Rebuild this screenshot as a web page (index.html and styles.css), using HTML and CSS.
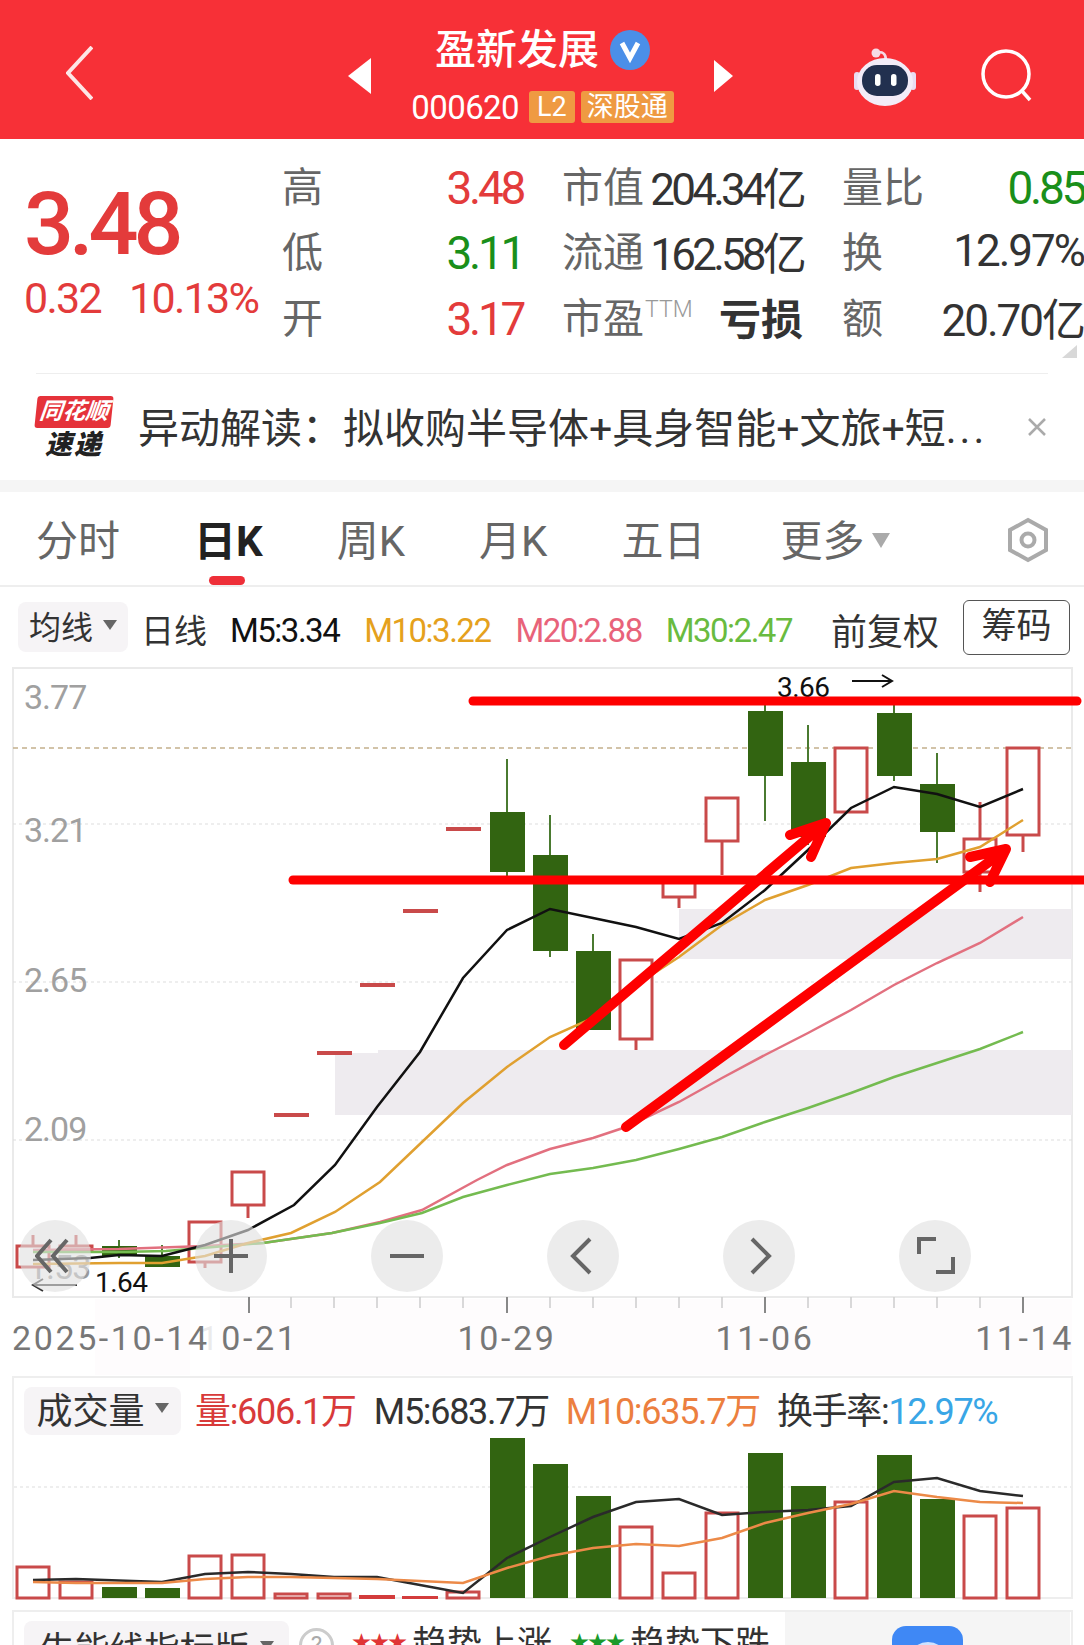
FILE: index.html
```html
<!DOCTYPE html>
<html lang="zh-CN">
<head>
    <meta charset="UTF-8">
    <meta name="viewport" content="width=device-width, initial-scale=1.0">
    <title>盈新发展 000620</title>
    <link rel="stylesheet" href="styles.css">
</head>
<body>
    <!-- Header -->
    <header class="head">
        <svg class="back" width="27" height="54" viewBox="0 0 27 54"><path d="M26 1 L2 27 L26 53" /></svg>
        <svg class="tri-left" width="23" height="36" viewBox="0 0 23 36"><path d="M23 0 V36 L0 18 Z" /></svg>
        <div class="title-box">
            <div class="title-row">
                <span class="title">盈新发展</span>
                <svg class="badge-v" width="40" height="40" viewBox="0 0 40 40"><circle cx="20" cy="20" r="20" /><path d="M12 13 L20 28 L28 13" /></svg>
            </div>
            <div class="code-row">
                <span class="code">000620</span>
                <span class="tag tag-l2">L2</span>
                <span class="tag">深股通</span>
            </div>
        </div>
        <svg class="tri-right" width="19" height="32" viewBox="0 0 19 32"><path d="M0 0 V32 L19 16 Z" /></svg>
        <svg class="robot" width="62" height="58" viewBox="0 0 62 58">
            <path d="M22 6 C28 2 32 6 32 12" fill="none" stroke="#f6d9e4" stroke-width="2.5" />
            <circle cx="22" cy="5" r="4.5" fill="#f6dbe6" />
            <rect x="0" y="24" width="6" height="18" rx="3" fill="#e9dcf2" />
            <rect x="56" y="24" width="6" height="18" rx="3" fill="#e9dcf2" />
            <ellipse cx="31" cy="34" rx="28" ry="24" fill="#f3ecf8" />
            <rect x="8" y="17" width="46" height="31" rx="15" fill="#22304f" />
            <rect x="21" y="26" width="5.5" height="12" rx="2.7" fill="#fff" />
            <rect x="37" y="26" width="5.5" height="12" rx="2.7" fill="#fff" />
        </svg>
        <svg class="search" width="52" height="56" viewBox="0 0 52 56">
            <circle cx="25" cy="25" r="23" />
            <path d="M41 42 L49 51" />
        </svg>
    </header>

    <!-- Quote -->
    <section class="quote">
        <div class="last">
            <div class="price">3.48</div>
            <div class="change"><span>0.32</span><span>10.13%</span></div>
        </div>
        <div class="stats">
            <div class="cell"><span class="lb">高</span><span class="up">3.48</span></div>
            <div class="cell"><span class="lb">市值</span><span class="val tight">204.34亿</span></div>
            <div class="cell"><span class="lb">量比</span><span class="down">0.85</span></div>
            <div class="cell"><span class="lb">低</span><span class="down">3.11</span></div>
            <div class="cell"><span class="lb">流通</span><span class="val tight">162.58亿</span></div>
            <div class="cell"><span class="lb">换</span><span class="val">12.97%</span></div>
            <div class="cell"><span class="lb">开</span><span class="up">3.17</span></div>
            <div class="cell"><span class="lb">市盈<sup class="ttm">TTM</sup></span><span class="val loss">亏损</span></div>
            <div class="cell"><span class="lb">额</span><span class="val">20.70亿</span></div>
        </div>
        <div class="corner"></div>
    </section>
    <div class="divider"></div>

    <!-- News -->
    <section class="news">
        <div class="logo">
            <div class="logo-top">同花顺</div>
            <div class="logo-bot">速递</div>
        </div>
        <div class="news-text">异动解读：拟收购半导体+具身智能+文旅+短<span class="dots">...</span></div>
        <svg class="close" width="20" height="20" viewBox="0 0 20 20"><path d="M2 2 L18 18 M18 2 L2 18" /></svg>
    </section>
    <div class="band"></div>

    <!-- Tabs -->
    <nav class="tabs">
        <span class="tab">分时</span>
        <span class="tab active">日K</span>
        <span class="tab">周K</span>
        <span class="tab">月K</span>
        <span class="tab">五日</span>
        <span class="tab more">更多<i class="caret caret-big"></i></span>
        <svg class="gear" width="46" height="46" viewBox="0 0 46 46">
            <path d="M23 3 L41 13 V33 L23 43 L5 33 V13 Z" />
            <circle cx="23" cy="23" r="6.5" />
        </svg>
    </nav>

    <!-- Toolbar -->
    <div class="toolbar">
        <span class="chip chip-ma">均线<i class="caret"></i></span>
        <span class="t-day">日线</span>
        <span class="ma m5">M5:3.34</span>
        <span class="ma m10">M10:3.22</span>
        <span class="ma m20">M20:2.88</span>
        <span class="ma m30">M30:2.47</span>
        <span class="fq">前复权</span>
        <span class="chips-btn">筹码</span>
    </div>

    <!-- K line chart -->
    <div class="chart">
        <svg class="kline" width="1084" height="709" viewBox="0 667 1084 709">
            <rect class="tint" x="95" y="1299" width="977" height="76" />
            <rect class="frame" x="13" y="668" width="1059" height="629" />
            <line class="grid-main" x1="13" y1="748" x2="1072" y2="748" />
            <line class="grid" x1="13" y1="824" x2="1072" y2="824" />
            <line class="grid" x1="13" y1="982" x2="1072" y2="982" />
            <line class="grid" x1="13" y1="1140" x2="1072" y2="1140" />

            <!-- pressure zones -->
            <path class="zone" d="M679 909 H1072 V959 H679 Z" />
            <path class="zone" d="M378 1050 H1072 V1115 H335 V1053 H378 Z" />

            <text class="ylab" x="24" y="709">3.77</text>
            <text class="ylab" x="24" y="842">3.21</text>
            <text class="ylab" x="24" y="992">2.65</text>
            <text class="ylab" x="24" y="1141">2.09</text>
            <text class="ylab faint" x="28" y="1279">1.53</text>

            <!-- wicks -->
            <g class="wick-dn">
                <line x1="119" y1="1240" x2="119" y2="1258" />
                <line x1="162" y1="1245" x2="162" y2="1267" />
                <line x1="507" y1="759" x2="507" y2="877" />
                <line x1="550" y1="815" x2="550" y2="957" />
                <line x1="593" y1="934" x2="593" y2="1030" />
                <line x1="765" y1="700" x2="765" y2="821" />
                <line x1="808" y1="725" x2="808" y2="845" />
                <line x1="894" y1="700" x2="894" y2="781" />
                <line x1="937" y1="753" x2="937" y2="863" />
            </g>
            <g class="wick-up">
                <line x1="33" y1="1235" x2="33" y2="1267" />
                <line x1="76" y1="1235" x2="76" y2="1250" />
                <line x1="205" y1="1222" x2="205" y2="1268" />
                <line x1="248" y1="1205" x2="248" y2="1218" />
                <line x1="636" y1="1039" x2="636" y2="1050" />
                <line x1="679" y1="897" x2="679" y2="908" />
                <line x1="722" y1="841" x2="722" y2="875" />
                <line x1="980" y1="802" x2="980" y2="892" />
                <line x1="1023" y1="835" x2="1023" y2="852" />
            </g>

            <!-- bodies -->
            <g class="body-up">
                <rect x="17" y="1246" width="32" height="21" />
                <rect x="60" y="1246" width="32" height="4" />
                <rect x="189" y="1222" width="32" height="40" />
                <rect x="232" y="1172" width="32" height="33" />
                <rect x="620" y="960" width="32" height="79" />
                <rect x="663" y="880" width="32" height="17" />
                <rect x="706" y="798" width="32" height="43" />
                <rect x="835" y="748" width="32" height="64" />
                <rect x="964" y="839" width="32" height="33" />
                <rect x="1007" y="748" width="32" height="87" />
            </g>
            <g class="body-dn">
                <rect x="102" y="1246" width="35" height="10" />
                <rect x="145" y="1256" width="35" height="11" />
                <rect x="490" y="812" width="35" height="60" />
                <rect x="533" y="855" width="35" height="96" />
                <rect x="576" y="951" width="35" height="79" />
                <rect x="748" y="711" width="35" height="65" />
                <rect x="791" y="762" width="35" height="75" />
                <rect x="877" y="713" width="35" height="63" />
                <rect x="920" y="784" width="35" height="48" />
            </g>
            <g class="dash">
                <rect x="274" y="1113" width="35" height="4" />
                <rect x="317" y="1051" width="35" height="4" />
                <rect x="360" y="983" width="35" height="4" />
                <rect x="403" y="909" width="35" height="4" />
                <rect x="446" y="827" width="35" height="4" />
            </g>

            <!-- moving averages -->
            <polyline class="ma-line l20" points="33,1250 119,1249 205,1246 263,1243 332,1233 380,1222 422,1210 477,1180 507,1165 550,1149 593,1138 626,1127 679,1102 722,1078 765,1055 808,1033 851,1010 894,985 937,963 980,943 1023,917" />
            <polyline class="ma-line l30" points="33,1252 119,1252 166,1251 263,1243 332,1233 380,1223 422,1213 463,1197 507,1185 550,1174 593,1168 636,1160 679,1149 722,1137 765,1122 808,1108 851,1093 894,1077 937,1063 980,1049 1023,1032" />
            <polyline class="ma-line l10" points="33,1264 119,1263 162,1263 205,1256 248,1243 291,1233 335,1212 380,1182 422,1142 463,1103 507,1067 550,1037 593,1018 636,985 679,957 722,925 765,900 808,885 851,868 894,863 937,859 980,847 1023,820" />
            <polyline class="ma-line l5" points="33,1260 90,1258 119,1255 162,1256 205,1245 248,1230 294,1205 335,1165 377,1107 420,1052 463,978 507,930 550,909 593,918 636,927 679,939 722,923 765,890 808,850 851,808 894,787 937,794 980,807 1023,789" />

            <!-- min / max marks -->
            <text class="mark" x="777" y="697">3.66</text>
            <path class="mark-arrow" d="M852 681 H892 M882 675 L892 681 L882 687" />
            <path class="mark-arrow faint-arrow" d="M33 1285 H77 M43 1279 L33 1285 L43 1291" />
            <text class="mark" x="95" y="1292">1.64</text>

            <!-- hand drawn lines -->
            <g class="pen">
                <line x1="473" y1="701" x2="1077" y2="701" />
                <line x1="293" y1="880" x2="1090" y2="880" />
                <path d="M564 1045 L822 826 M790 835 L826 823 L811 857" />
                <path d="M626 1127 L1004 851 M970 857 L1006 849 L990 882" />
            </g>

            <!-- x axis -->
            <g class="ticks">
                <line x1="291" y1="1297" x2="291" y2="1308" /><line x1="334" y1="1297" x2="334" y2="1308" />
                <line x1="377" y1="1297" x2="377" y2="1308" /><line x1="420" y1="1297" x2="420" y2="1308" />
                <line x1="463" y1="1297" x2="463" y2="1308" /><line x1="550" y1="1297" x2="550" y2="1308" />
                <line x1="593" y1="1297" x2="593" y2="1308" /><line x1="636" y1="1297" x2="636" y2="1308" />
                <line x1="679" y1="1297" x2="679" y2="1308" /><line x1="722" y1="1297" x2="722" y2="1308" />
                <line x1="808" y1="1297" x2="808" y2="1308" /><line x1="851" y1="1297" x2="851" y2="1308" />
                <line x1="894" y1="1297" x2="894" y2="1308" /><line x1="937" y1="1297" x2="937" y2="1308" />
                <line x1="980" y1="1297" x2="980" y2="1308" />
            </g>
            <g class="ticks-big">
                <line x1="249" y1="1297" x2="249" y2="1313" />
                <line x1="507" y1="1297" x2="507" y2="1313" />
                <line x1="765" y1="1297" x2="765" y2="1313" />
                <line x1="1023" y1="1297" x2="1023" y2="1313" />
            </g>
            <text class="xlab" x="249" y="1350" text-anchor="middle">10-21</text>
            <rect class="glitch" x="190" y="1299" width="30" height="76" />
            <text class="xlab" x="12" y="1350">2025-10-14</text>
            <text class="xlab" x="507" y="1350" text-anchor="middle">10-29</text>
            <text class="xlab" x="765" y="1350" text-anchor="middle">11-06</text>
            <text class="xlab" x="1074" y="1350" text-anchor="end">11-14</text>
        </svg>

        <div class="pan-btns">
            <button class="pan"><svg width="40" height="40" viewBox="0 0 40 40"><path d="M16 4 L2 20 L16 36 M32 4 L18 20 L32 36" /></svg></button>
            <button class="pan"><svg width="40" height="40" viewBox="0 0 40 40"><path d="M3 20 H37 M20 3 V37" /></svg></button>
            <button class="pan"><svg width="40" height="40" viewBox="0 0 40 40"><path d="M3 20 H37" /></svg></button>
            <button class="pan"><svg width="40" height="40" viewBox="0 0 40 40"><path d="M27 3 L10 20 L27 37" /></svg></button>
            <button class="pan"><svg width="40" height="40" viewBox="0 0 40 40"><path d="M13 3 L30 20 L13 37" /></svg></button>
            <button class="pan"><svg width="40" height="40" viewBox="0 0 40 40"><path d="M21 3 H4 V18 M21 36 H38 V21" /></svg></button>
        </div>
    </div>

    <!-- Volume -->
    <section class="vol">
        <div class="vol-head">
            <span class="chip chip-vol">成交量<i class="caret"></i></span>
            <span class="v-now">量:606.1万</span>
            <span class="v-m5">M5:683.7万</span>
            <span class="v-m10">M10:635.7万</span>
            <span class="v-rate">换手率:<em>12.97%</em></span>
        </div>
        <svg class="vol-bars" width="1057" height="161" viewBox="14 1436 1057 161">
            <line class="grid" x1="14" y1="1487" x2="1071" y2="1487" />
            <g class="body-up">
                <rect x="17" y="1567" width="32" height="31" />
                <rect x="60" y="1582" width="32" height="16" />
                <rect x="189" y="1556" width="32" height="42" />
                <rect x="232" y="1555" width="32" height="43" />
                <rect x="275" y="1594" width="32" height="4" />
                <rect x="318" y="1594" width="32" height="4" />
                <rect x="447" y="1592" width="32" height="6" />
                <rect x="620" y="1527" width="32" height="71" />
                <rect x="663" y="1573" width="32" height="25" />
                <rect x="706" y="1513" width="32" height="85" />
                <rect x="835" y="1502" width="32" height="96" />
                <rect x="964" y="1516" width="32" height="82" />
                <rect x="1007" y="1508" width="32" height="90" />
            </g>
            <g class="vol-solid">
                <rect x="359" y="1595" width="36" height="4" />
                <rect x="402" y="1596" width="36" height="3" />
            </g>
            <g class="body-dn">
                <rect x="102" y="1587" width="35" height="11" />
                <rect x="145" y="1588" width="35" height="10" />
                <rect x="490" y="1438" width="35" height="160" />
                <rect x="533" y="1464" width="35" height="134" />
                <rect x="576" y="1496" width="35" height="102" />
                <rect x="748" y="1453" width="35" height="145" />
                <rect x="791" y="1486" width="35" height="112" />
                <rect x="877" y="1455" width="35" height="143" />
                <rect x="920" y="1499" width="35" height="99" />
            </g>
            <polyline class="vol-line v5" points="33,1580 76,1579 162,1582 205,1574 248,1572 291,1574 334,1577 377,1577 420,1585 463,1593 507,1558 550,1537 593,1517 636,1502 679,1499 722,1515 765,1512 808,1510 851,1506 894,1482 937,1478 980,1491 1023,1496" />
            <polyline class="vol-line v10" points="33,1582 76,1583 162,1583 205,1579 248,1577 291,1577 334,1578 377,1579 420,1581 463,1583 507,1568 550,1556 593,1548 636,1544 679,1546 722,1538 765,1523 808,1513 851,1504 894,1491 937,1497 980,1502 1023,1503" />
        </svg>
    </section>

    <!-- Bottom panel, cut off by the screen -->
    <section class="extra">
        <span class="chip chip-extra">牛能线指标版<i class="caret"></i></span>
        <span class="help">?</span>
        <span class="stars red">★★★</span>
        <span class="extra-txt">趋势上涨</span>
        <span class="stars green">★★★</span>
        <span class="extra-txt">趋势下跌</span>
        <div class="ad"><div class="ad-icon"><div class="ad-ring"></div></div></div>
    </section>
</body>
</html>
```

FILE: styles.css
```css
* {
    box-sizing: border-box;
}
body {
    margin: 0;
    width: 1084px;
    height: 1645px;
    overflow: hidden;
    background: #fff;
    color: #333;
    font-family: Roboto, "Noto Sans CJK SC", sans-serif;
}

/* header */
.head {
    display: flex;
    align-items: center;
    height: 139px;
    padding-left: 66px;
    background: #f73037;
}
.back {
    margin-top: 6px;
    margin-right: 255px;
    fill: none;
    stroke: #fde6e6;
    stroke-width: 4;
}
.tri-left, .tri-right {
    fill: #fff;
    margin-top: 12px;
}
.title-box {
    display: flex;
    flex-direction: column;
    align-items: center;
    align-self: flex-start;
    width: 343px;
    padding-top: 25px;
}
.title-row {
    display: flex;
    align-items: center;
    gap: 11px;
    height: 50px;
    color: #fff;
}
.title {
    font-size: 41px;
    font-weight: 500;
    line-height: 50px;
}
.badge-v circle {
    fill: #4b8fe8;
}
.badge-v path {
    fill: none;
    stroke: #fff;
    stroke-width: 5;
}
.code-row {
    display: flex;
    align-items: center;
    gap: 6px;
    height: 32px;
    margin-top: 16px;
    color: #fff;
}
.code {
    font-size: 33px;
    letter-spacing: -0.6px;
    margin-right: 4px;
}
.tag {
    height: 32px;
    padding: 0 6px;
    border-radius: 3px;
    background: #ef9a42;
    color: #fff;
    font-size: 27px;
    line-height: 32px;
}
.tag-l2 {
    padding: 0 8px;
}
.robot {
    margin-left: 121px;
    margin-top: 14px;
}
.search {
    margin-left: 65px;
    margin-top: 14px;
    fill: none;
    stroke: #fff;
    stroke-width: 3.5;
}

/* quote */
.quote {
    position: relative;
    display: flex;
    height: 234px;
    padding-left: 24px;
}
.last {
    width: 259px;
    padding-top: 39px;
    color: #e33b3b;
}
.price {
    font-size: 88px;
    font-weight: 500;
    line-height: 92px;
    letter-spacing: -5px;
}
.change {
    display: flex;
    gap: 28px;
    margin-top: 6px;
    font-size: 43px;
    line-height: 44px;
    letter-spacing: -1.7px;
}
.stats {
    display: grid;
    grid-template-columns: 241px 241px 242px;
    grid-auto-rows: 65.5px;
    column-gap: 39px;
    margin-top: 15px;
    font-size: 46px;
}
.cell {
    display: flex;
    justify-content: space-between;
    align-items: center;
    letter-spacing: -3.3px;
    white-space: nowrap;
}
.cell > span {
    padding-top: 2px;
}
.cell > .lb {
    padding: 0 0 6px;
    color: #666;
    font-size: 41px;
    letter-spacing: 0;
}
.up {
    color: #e33b3b;
}
.down {
    color: #1a8f1a;
}
.stats .val {
    padding: 0 0 2px;
    color: #333;
    font-size: 44px;
    letter-spacing: -2px;
}
.stats .tight {
    letter-spacing: -3.8px;
}
.ttm {
    color: #999;
    font-size: 23px;
    font-weight: 300;
    vertical-align: 16px;
    line-height: 0;
    margin-left: 1px;
}
.stats .loss {
    font-size: 42px;
    font-weight: 700;
    letter-spacing: 0;
}
.corner {
    position: absolute;
    right: 7px;
    bottom: 15px;
    width: 0;
    height: 0;
    border-left: 15px solid transparent;
    border-bottom: 13px solid #d8d8d8;
}
.divider {
    height: 1px;
    margin: 0 36px;
    background: #eee;
}

/* news */
.news {
    display: flex;
    align-items: center;
    height: 106px;
    padding-left: 36px;
}
.logo {
    width: 76px;
    margin-right: 2px;
    text-align: center;
}
.logo-top {
    height: 32px;
    border-radius: 3px;
    background: #e5323a;
    color: #fff;
    font-size: 23px;
    font-style: italic;
    font-weight: 700;
    line-height: 32px;
    transform: skewX(-6deg);
}
.logo-bot {
    margin-top: 3px;
    color: #222;
    font-size: 27px;
    font-style: italic;
    font-weight: 900;
    line-height: 28px;
    letter-spacing: 2px;
}
.news-text {
    width: 875px;
    margin-bottom: 4px;
    margin-left: 24px;
    color: #333;
    font-size: 41px;
    white-space: nowrap;
}
.dots {
    letter-spacing: 3px;
}
.close {
    margin-left: 14px;
    fill: none;
    stroke: #aaa;
    stroke-width: 2.5;
}
.band {
    height: 12px;
    background: #f5f5f5;
}

/* tabs */
.tabs {
    display: flex;
    align-items: center;
    gap: 74px;
    height: 95px;
    padding-left: 36px;
    border-bottom: 2px solid #eee;
}
.tab {
    position: relative;
    height: 93px;
    padding-top: 3px;
    color: #666;
    font-size: 42px;
    line-height: 93px;
}
.tab.active {
    color: #222;
    font-weight: 700;
}
.tab.active::after {
    content: "";
    position: absolute;
    left: 15px;
    bottom: 0;
    width: 36px;
    height: 9px;
    border-radius: 5px;
    background: #ee2f38;
}
.tab.more {
    margin-left: 1px;
}
.caret {
    display: inline-block;
    width: 0;
    height: 0;
    margin-left: 10px;
    border-left: 7px solid transparent;
    border-right: 7px solid transparent;
    border-top: 10px solid #666;
    vertical-align: 6px;
}
.caret-big {
    border-left-width: 9px;
    border-right-width: 9px;
    border-top: 15px solid #aaa;
    vertical-align: 8px;
    margin-left: 8px;
}
.gear {
    position: absolute;
    left: 1005px;
    top: 517px;
    fill: none;
    stroke: #aaa;
    stroke-width: 4;
}

/* toolbar */
.toolbar {
    display: flex;
    align-items: center;
    height: 80px;
    padding-left: 18px;
    font-size: 33px;
    white-space: nowrap;
}
.chip {
    display: inline-flex;
    flex: none;
    align-items: center;
    justify-content: center;
    width: 110px;
    height: 50px;
    border-radius: 8px;
    background: #f6f4f6;
    color: #333;
}
.chip-ma {
    padding-bottom: 4px;
    font-size: 32px;
}
.t-day {
    margin-left: 13px;
    padding-top: 3px;
    color: #333;
}
.ma {
    padding-top: 6px;
    font-size: 33px;
    letter-spacing: -1.5px;
}
.m5 {
    margin-left: 23px;
    color: #111;
}
.m10 {
    margin-left: 25px;
    color: #e5a11d;
}
.m20 {
    margin-left: 25px;
    color: #e8637a;
}
.m30 {
    margin-left: 24px;
    color: #69bb40;
}
.fq {
    margin-left: 39px;
    padding-top: 3px;
    color: #333;
    font-size: 36px;
}
.chips-btn {
    flex: none;
    margin-left: 24px;
    width: 107px;
    height: 55px;
    border: 1px solid #555;
    border-radius: 6px;
    color: #333;
    font-size: 35px;
    line-height: 52px;
    text-align: center;
}

/* chart */
.chart {
    position: relative;
    height: 709px;
}
.kline {
    display: block;
}
.tint {
    fill: #fefcfd;
}
.frame {
    fill: none;
    stroke: #eaeaea;
    stroke-width: 2;
}
.grid-main {
    stroke: #c4b08c;
    stroke-width: 1.5;
    stroke-dasharray: 5 4;
}
.grid {
    stroke: #ddd;
    stroke-width: 1;
    stroke-dasharray: 3 3;
}
.zone {
    fill: #eeebef;
}
.ylab {
    fill: #a0a0a0;
    font-size: 34px;
    letter-spacing: -1px;
}
.ylab.faint {
    fill: #999;
}
.wick-dn line {
    stroke: #4a7a30;
    stroke-width: 2;
}
.wick-up line {
    stroke: #c94a4a;
    stroke-width: 3;
}
.body-up rect {
    fill: #fff;
    stroke: #c94a4a;
    stroke-width: 3;
}
.body-dn rect {
    fill: #326411;
}
.dash rect {
    fill: #c94a4a;
}
.ma-line {
    fill: none;
    stroke-width: 2.5;
}
.l5 {
    stroke: #111;
}
.l10 {
    stroke: #e0a030;
}
.l20 {
    stroke: #e2707f;
}
.l30 {
    stroke: #74bb50;
}
.mark {
    fill: #111;
    font-size: 28px;
    letter-spacing: -0.5px;
}
.mark-arrow {
    fill: none;
    stroke: #111;
    stroke-width: 2;
}
.faint-arrow {
    stroke: #333;
}
.pen line, .pen path {
    fill: none;
    stroke: #fe0000;
    stroke-width: 9;
    stroke-linecap: round;
}
.pen path {
    stroke-width: 10;
    stroke-linejoin: round;
}
.ticks line {
    stroke: #ccc;
    stroke-width: 1.5;
}
.ticks-big line {
    stroke: #888;
    stroke-width: 2;
}
.xlab {
    fill: #777;
    font-size: 34px;
    letter-spacing: 2.6px;
}
.glitch {
    fill: rgba(255, 255, 255, 0.85);
}
.pan-btns {
    position: absolute;
    left: 19px;
    top: 553px;
    display: flex;
    gap: 104px;
}
.pan {
    display: flex;
    align-items: center;
    justify-content: center;
    width: 72px;
    height: 72px;
    padding: 0;
    border: 0;
    border-radius: 50%;
    background: rgba(224, 224, 224, 0.62);
}
.pan svg {
    fill: none;
    stroke: #666;
    stroke-width: 4;
}

/* volume */
.vol {
    height: 223px;
    margin: 0 11px 0 12px;
    border: 2px solid #eee;
}
.vol-head {
    display: flex;
    align-items: center;
    height: 58px;
    padding: 8px 0 0 10px;
    font-size: 36px;
    white-space: nowrap;
    letter-spacing: -1.3px;
}
.vol-head > span {
    margin-bottom: 6px;
}
.vol-head > .chip {
    margin-bottom: 0;
    padding-bottom: 6px;
}
.chip-vol {
    width: 157px;
    height: 48px;
    margin-right: 14px;
    letter-spacing: 0;
}
.v-now {
    color: #d83a3a;
}
.v-m5 {
    margin-left: 18px;
    color: #333;
}
.v-m10 {
    margin-left: 17px;
    color: #ec7f3f;
}
.v-rate {
    margin-left: 17px;
    color: #333;
}
.v-rate em {
    color: #39a6e6;
    font-style: normal;
}
.vol-bars {
    display: block;
    overflow: visible;
}
.vol-solid rect {
    fill: #d33c3c;
}
.vol-line {
    fill: none;
    stroke-width: 2.5;
}
.v5 {
    stroke: #2a2a2a;
}
.v10 {
    stroke: #ec8a48;
}

/* bottom panel */
.extra {
    position: relative;
    display: flex;
    align-items: flex-start;
    height: 60px;
    margin: 11px 11px 0 12px;
    padding: 9px 0 0 10px;
    border: solid #eee;
    border-width: 2px 2px 0;
    font-size: 35px;
    white-space: nowrap;
}
.chip-extra {
    width: 265px;
}
.help {
    width: 35px;
    height: 35px;
    margin: 7px 0 0 10px;
    border: 3px solid #ccc;
    border-radius: 50%;
    color: #aaa;
    font-size: 24px;
    line-height: 29px;
    text-align: center;
}
.stars {
    margin: 10px 0 0 18px;
    font-size: 19px;
    line-height: 24px;
    letter-spacing: -1px;
}
.red {
    color: #e03535;
}
.green {
    margin-left: 18px;
    color: #1a9a2a;
}
.extra-txt {
    margin: 4px 0 0 6px;
    color: #333;
    line-height: 40px;
}
.ad {
    position: absolute;
    left: 771px;
    top: 0;
    width: 285px;
    height: 60px;
    background: #f5f5f5;
}
.ad-icon {
    width: 71px;
    height: 60px;
    margin: 14px 0 0 107px;
    padding-top: 16px;
    border-radius: 14px;
    background: #3f88f5;
}
.ad-ring {
    width: 40px;
    height: 40px;
    margin: 0 auto;
    border: 5px solid #cfe2ff;
    border-radius: 50%;
}
```
